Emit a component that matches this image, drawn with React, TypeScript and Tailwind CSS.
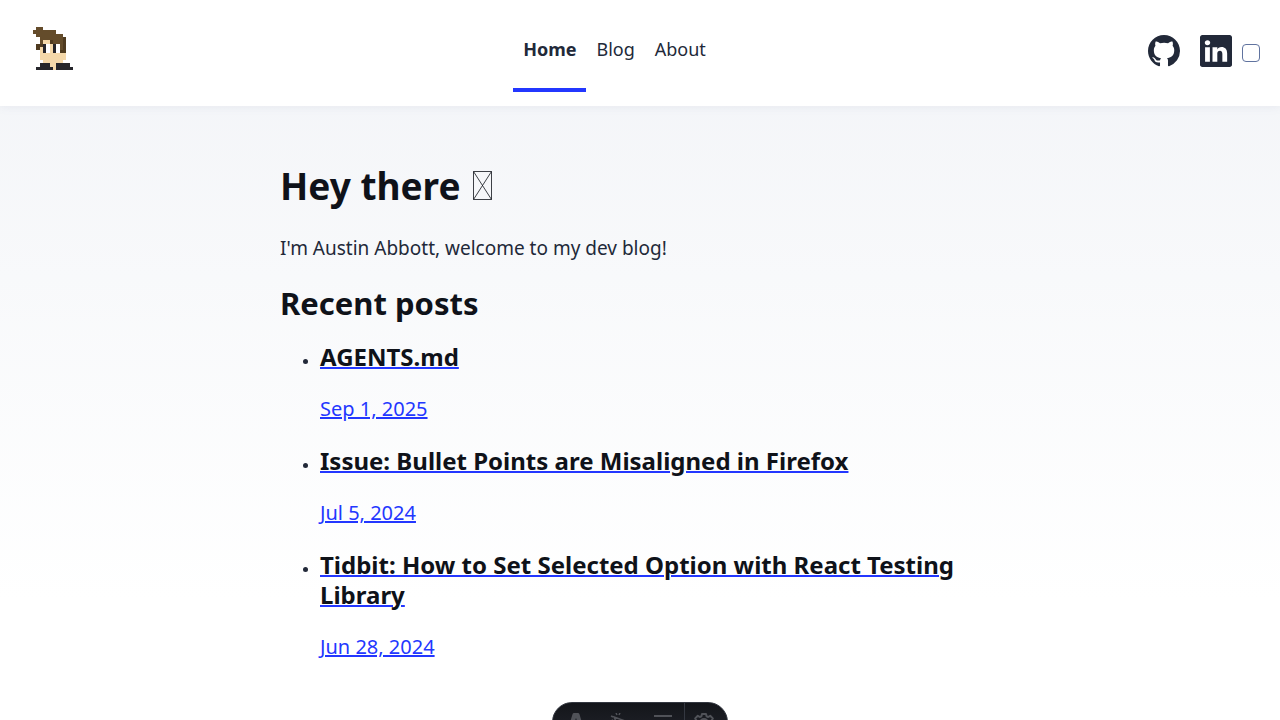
const sprite = [
  '.bb.........',
  'bbbbbbb.....',
  '.bbbbbbbb...',
  '..bbbbbbbd..',
  '..bssdbbbd..',
  '.ddkwskwbd..',
  '.dskwskwbd..',
  '..skwskwdd..',
  '..ssssssss..',
  '..ssssssss..',
  '...ssssss...',
  '..kkksskkkk.',
  '.kkkkkskkkkk',
];

const palette: Record<string, string> = {
  b: '#644c2b',
  d: '#4f3b20',
  s: '#f4d8a9',
  w: '#ffffff',
  k: '#26262b',
};

const posts = [
  { title: 'AGENTS.md', date: 'Sep 1, 2025', href: '#agents-md' },
  { title: 'Issue: Bullet Points are Misaligned in Firefox', date: 'Jul 5, 2024', href: '#bullet-points' },
  { title: 'Tidbit: How to Set Selected Option with React Testing Library', date: 'Jun 28, 2024', href: '#selected-option' },
];

function Avatar() {
  return (
    <svg viewBox="0 0 12 13" preserveAspectRatio="none" shapeRendering="crispEdges" className="h-[43px] w-10" aria-hidden="true">
      {sprite.flatMap((row, y) =>
        [...row].map((cell, x) =>
          cell === '.' ? null : <rect key={`${x}-${y}`} x={x} y={y} width="1" height="1" fill={palette[cell]} />,
        ),
      )}
    </svg>
  );
}

function Header() {
  return (
    <header className="bg-white px-5 shadow-[0_2px_8px_rgba(96,115,159,0.08)]">
      <nav className="flex h-[106px] items-start justify-between" aria-label="Main">
        <a href="#home" aria-label="Austin Abbott" className="flex w-[61px] pt-[27px] pl-[13px]">
          <Avatar />
        </a>
        <div className="flex text-lg leading-[34px]">
          <a href="#home" className="border-b-4 border-[#2337ff] px-[10px] pt-8 pb-[22px] font-bold">Home</a>
          <a href="#blog" className="px-[10px] pt-8 pb-[22px]">Blog</a>
          <a href="#about" className="px-[10px] pt-8 pb-[22px]">About</a>
        </div>
        <div className="flex items-start pt-[35px]">
          <a href="#github" aria-label="GitHub" className="mr-5">
            <svg viewBox="0 0 16 16" className="size-8" fill="currentColor" aria-hidden="true">
              <path d="M8 0C3.58 0 0 3.58 0 8c0 3.54 2.29 6.53 5.47 7.59.4.07.55-.17.55-.38 0-.19-.01-.82-.01-1.49-2.01.37-2.53-.49-2.69-.94-.09-.23-.48-.94-.82-1.13-.28-.15-.68-.52-.01-.53.63-.01 1.08.58 1.23.82.72 1.21 1.87.87 2.33.66.07-.52.28-.87.51-1.07-1.78-.2-3.64-.89-3.64-3.95 0-.87.31-1.59.82-2.15-.08-.2-.36-1.02.08-2.12 0 0 .67-.21 2.2.82.64-.18 1.32-.27 2-.27.68 0 1.36.09 2 .27 1.53-1.04 2.2-.82 2.2-.82.44 1.1.16 1.92.08 2.12.51.56.82 1.27.82 2.15 0 3.07-1.87 3.75-3.65 3.95.29.25.54.73.54 1.48 0 1.07-.01 1.93-.01 2.2 0 .21.15.46.55.38A8.012 8.012 0 0 0 16 8c0-4.42-3.58-8-8-8z" />
            </svg>
          </a>
          <a href="#linkedin" aria-label="LinkedIn" className="mr-[10px]">
            <svg viewBox="0 0 16 16" className="size-8" fill="currentColor" aria-hidden="true">
              <path d="M0 1.146C0 .513.526 0 1.175 0h13.65C15.474 0 16 .513 16 1.146v13.708c0 .633-.526 1.146-1.175 1.146H1.175C.526 16 0 15.487 0 14.854V1.146zm4.943 12.248V6.169H2.542v7.225h2.401zm-1.2-8.212c.837 0 1.358-.554 1.358-1.248-.015-.709-.52-1.248-1.342-1.248-.822 0-1.359.54-1.359 1.248 0 .694.521 1.248 1.327 1.248h.016zm4.908 8.212V9.359c0-.216.016-.432.08-.586.173-.431.568-.878 1.232-.878.869 0 1.216.662 1.216 1.634v3.865h2.401V9.25c0-2.22-1.184-3.252-2.764-3.252-1.274 0-1.845.7-2.165 1.193v.025h-.016a5.54 5.54 0 0 1 .016-.025V6.169h-2.4c.03.678 0 7.225 0 7.225h2.4z" />
            </svg>
          </a>
          <button type="button" aria-label="Toggle theme" className="mt-[9px] size-[18px] rounded border border-[#60739f] bg-white" />
        </div>
      </nav>
    </header>
  );
}

function DevToolbar() {
  return (
    <div className="fixed bottom-0 left-1/2 h-[18px] w-[176px] -translate-x-1/2 overflow-hidden">
      <div className="flex h-10 overflow-hidden rounded-full border border-[#343841] bg-linear-to-b from-[#13151a] to-[#24262d] text-[#505258]">
        <button type="button" aria-label="Menu" className="flex w-[45px] justify-center pt-[10px]">
          <svg viewBox="0 0 16 20" className="h-5 w-4" fill="currentColor" aria-hidden="true">
            <path d="M6 0h4q1 0 1.400 1L16 16q-3-1.500-5.700-2L8.300 5.500Q8 5 7.700 5.500L5.700 14Q3 14.500 0 16L4.600 1Q5 0 6 0Z" />
          </svg>
        </button>
        <button type="button" aria-label="Inspect" className="flex w-[43px] justify-center pt-[10px]">
          <svg viewBox="0 0 20 20" className="size-5" fill="none" stroke="currentColor" strokeWidth="1.500" aria-hidden="true">
            <path d="m4 4 14 5-6 2-2 6Z M6 0l1 2 M10 0l-1 2 M1 3l2 1 M1 8l2-1" />
          </svg>
        </button>
        <button type="button" aria-label="Audit" className="flex w-[43px] justify-center pt-[12px]">
          <svg viewBox="0 0 20 18" className="h-[18px] w-5" fill="none" stroke="currentColor" strokeWidth="2" aria-hidden="true">
            <path d="M1 1h18M1 8h18" />
          </svg>
        </button>
        <button type="button" aria-label="Settings" className="flex flex-1 border-l border-[#343841] pt-[10px] pl-[9px]">
          <svg viewBox="0 0 20 20" className="size-5" fill="none" stroke="currentColor" strokeWidth="2" strokeLinejoin="round" aria-hidden="true">
            <path d="M8 1h4l.6 2.300 1.600.7 2-1.200 2.600 2.600-1.200 2.100.6 1.500 1.800.5v2l-2.400.6v5H2v-5L0 11.500v-2L1.800 9l.6-1.500-1.200-2.100 2.600-2.600 2 1.200 1.600-.7Z" />
            <circle cx="10" cy="10" r="4" />
          </svg>
        </button>
      </div>
    </div>
  );
}

export default function App() {
  return (
    <div className="min-h-screen bg-white bg-[linear-gradient(rgba(229,233,240,0.5),#fff)] bg-[length:100%_600px] bg-no-repeat font-['Noto_Sans',sans-serif] text-[19px] leading-[34px] text-[#222939]">
      <Header />
      <main className="mx-auto flex max-w-[760px] flex-col gap-5 px-5 pt-[54px] pb-5">
        <h1 className="flex items-center gap-3 text-[37px] leading-[51px] font-bold text-[#0f1219]">
          Hey there
          <svg viewBox="0 0 19 29" className="h-[29px] w-[19px]" fill="none" stroke="currentColor" strokeOpacity="0.8" role="img" aria-label="waving hand">
            <path d="M.5.500h18v28H.5ZM.5.500l18 28M18.500.5.500 28.500" />
          </svg>
        </h1>
        <p>I'm Austin Abbott, welcome to my dev blog!</p>
        <h2 className="text-[31px] leading-[37px] font-bold text-[#0f1219]">Recent posts</h2>
        <ul className="flex list-disc flex-col gap-5 pl-10">
          {posts.map((post) => (
            <li key={post.href} className="marker:text-[15px]">
              <a href={post.href} className="block text-xl leading-[34px] text-[#2337ff] underline decoration-2">
                <h3 className="mb-5 text-2xl leading-[30px] font-bold"><span className="text-[#0f1219]">{post.title}</span></h3>
                <time>{post.date}</time>
              </a>
            </li>
          ))}
        </ul>
      </main>
      <DevToolbar />
    </div>
  );
}
